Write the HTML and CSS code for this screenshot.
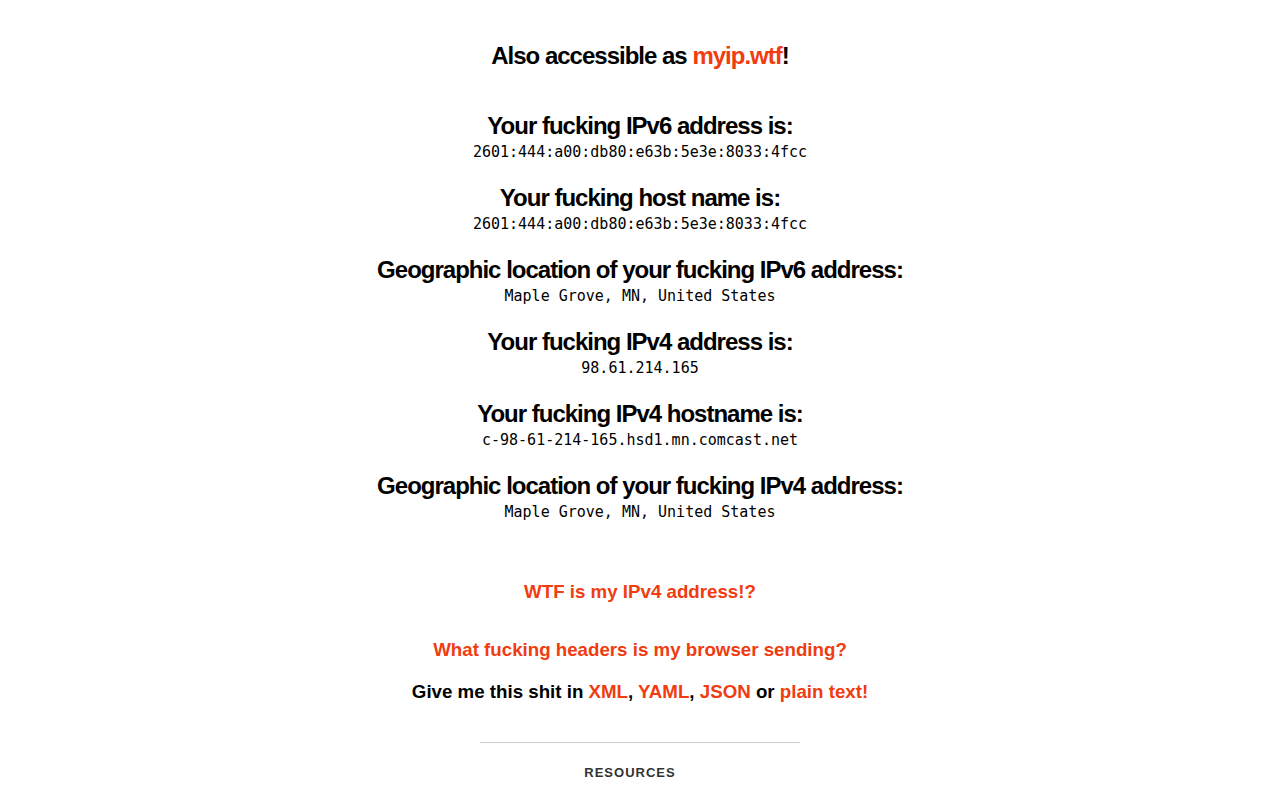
FILE: index.html
```html
<!DOCTYPE html>
<html>
<head>
<meta charset="utf-8">
<link rel="stylesheet" href="styles.css">
<title>WTF is my IP?!</title>
</head>
<body>
<main class="page">
  <h1 class="also">Also accessible as <a href="#">myip.wtf</a>!</h1>
  <section class="info">
    <div class="item">
      <h2>Your fucking IPv6 address is:</h2>
      <code>2601:444:a00:db80:e63b:5e3e:8033:4fcc</code>
    </div>
    <div class="item">
      <h2>Your fucking host name is:</h2>
      <code>2601:444:a00:db80:e63b:5e3e:8033:4fcc</code>
    </div>
    <div class="item">
      <h2>Geographic location of your fucking IPv6 address:</h2>
      <code>Maple Grove, MN, United States</code>
    </div>
    <div class="item">
      <h2>Your fucking IPv4 address is:</h2>
      <code>98.61.214.165</code>
    </div>
    <div class="item">
      <h2>Your fucking IPv4 hostname is:</h2>
      <code>c-98-61-214-165.hsd1.mn.comcast.net</code>
    </div>
    <div class="item">
      <h2>Geographic location of your fucking IPv4 address:</h2>
      <code>Maple Grove, MN, United States</code>
    </div>
  </section>
  <p class="link first"><a href="#">WTF is my IPv4 address!?</a></p>
  <p class="link second"><a href="#">What fucking headers is my browser sending?</a></p>
  <p class="link formats">Give me this shit in <a href="#">XML</a>, <a href="#">YAML</a>, <a href="#">JSON</a> or <a href="#">plain text!</a></p>
  <hr class="rule">
  <h3 class="resources">RESOURCES</h3>
</main>
</body>
</html>
```
FILE: styles.css
```css
html, body {
  margin: 0;
  padding: 0;
  background: #fff;
}
body {
  font-family: "Liberation Sans", Arial, sans-serif;
  color: #000;
  text-align: center;
}
a {
  color: #f03c0f;
  text-decoration: none;
}
.page {
  display: flex;
  flex-direction: column;
  align-items: center;
  padding-top: 40px;
}
.also {
  margin: 0;
  font-size: 24px;
  line-height: 32px;
  letter-spacing: -1px;
  font-weight: bold;
}
.info {
  display: flex;
  flex-direction: column;
  gap: 18px;
  margin-top: 38px;
}
.item {
  display: flex;
  flex-direction: column;
  align-items: center;
}
.item h2 {
  margin: 0;
  font-size: 24px;
  line-height: 32px;
  letter-spacing: -1px;
  font-weight: bold;
}
.item code {
  font-family: "DejaVu Sans Mono", monospace;
  font-size: 15px;
  line-height: 24px;
  margin-top: -2px;
}
.link {
  margin: 0;
  font-weight: bold;
  font-size: 18.72px;
  line-height: 24px;
}
.first {
  margin-top: 56px;
}
.second {
  margin-top: 34px;
}
.formats {
  margin-top: 18px;
}
.rule {
  width: 320px;
  margin: 38px 0 0 0;
  border: 0;
  border-top: 1px solid #ccc;
}
.resources {
  margin: 22px 0 0 0;
  font-size: 13px;
  letter-spacing: 1px;
  color: #333;
  font-weight: bold;
  padding-right: 20px;
}
```
